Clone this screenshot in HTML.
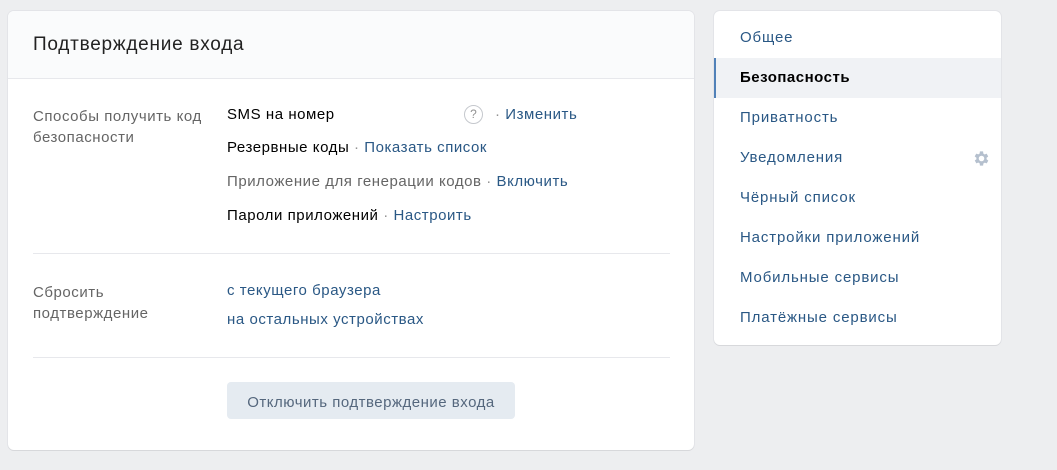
<!DOCTYPE html>
<html><head><meta charset="utf-8"><style>
*{margin:0;padding:0;box-sizing:border-box}
body{width:1057px;height:470px;background:#edeef0;font-family:"Liberation Sans",sans-serif;position:relative;overflow:hidden}
.card{position:absolute;background:#fff;border-radius:6px;box-shadow:0 1px 0 0 #d7d8db,0 0 0 1px #e3e4e8}
.a{position:absolute;white-space:nowrap;font-size:15px;line-height:18px;letter-spacing:.55px}
.k{color:#000}.g{color:#656565}.l{color:#2a5885}.d{color:#939393}
.m{position:absolute;left:26px;font-size:15px;color:#2a5885;letter-spacing:.85px;white-space:nowrap}
</style></head><body>
<div class="card" style="left:8px;top:11px;width:686px;height:439px;overflow:hidden">
  <div style="position:absolute;left:0;top:0;width:686px;height:68px;background:#fafbfc;border-bottom:1px solid #e7e8ec"></div>
  <div class="a k" style="left:25px;top:23px;font-size:19px;line-height:22px;color:#222;letter-spacing:.75px">Подтверждение входа</div>
  <div class="a g" style="left:25px;top:95px;line-height:21px">Способы получить код<br>безопасности</div>
  <div class="a k" style="left:219px;top:95px">SMS на номер</div>
  <div style="position:absolute;left:456px;top:94px;width:19px;height:19px;border:1px solid #c5c8cd;border-radius:50%;color:#939393;font-size:12px;text-align:center;line-height:17px">?</div>
  <div class="a" style="left:487px;top:95px"><span class="d">·</span> <span class="l">Изменить</span></div>
  <div class="a" style="left:219px;top:128px"><span class="k">Резервные коды</span> <span class="d">·</span> <span class="l">Показать список</span></div>
  <div class="a" style="left:219px;top:162px"><span class="g">Приложение для генерации кодов</span> <span class="d">·</span> <span class="l">Включить</span></div>
  <div class="a" style="left:219px;top:196px"><span class="k">Пароли приложений</span> <span class="d">·</span> <span class="l">Настроить</span></div>
  <div style="position:absolute;left:25px;top:242px;width:637px;height:1px;background:#e7e8ec"></div>
  <div class="a g" style="left:25px;top:271px;line-height:21px">Сбросить<br>подтверждение</div>
  <div class="a l" style="left:219px;top:271px">с текущего браузера</div>
  <div class="a l" style="left:219px;top:300px">на остальных устройствах</div>
  <div style="position:absolute;left:25px;top:346px;width:637px;height:1px;background:#e7e8ec"></div>
  <div style="position:absolute;left:219px;top:371px;width:288px;height:37px;background:#e5ebf1;border-radius:4px;color:#55677d;font-size:15px;letter-spacing:.5px;text-align:center;line-height:37px;padding-top:2px">Отключить подтверждение входа</div>
</div>
<div class="card" style="left:714px;top:11px;width:287px;height:334px;overflow:hidden">
  <div style="position:absolute;left:0;top:47px;width:287px;height:40px;background:#f0f2f5;border-left:2px solid #5181b8"></div>
  <div class="m" style="top:18px">Общее</div>
  <div class="m" style="top:58px;color:#000;font-weight:bold;letter-spacing:.5px">Безопасность</div>
  <div class="m" style="top:98px">Приватность</div>
  <div class="m" style="top:138px">Уведомления</div>
  <svg style="position:absolute;left:258px;top:138px" width="19" height="19" viewBox="0 0 24 24"><path fill="#b5c0ce" d="M19.4 13a7.5 7.5 0 0 0 0-2l2.1-1.6-2-3.5-2.5 1a7 7 0 0 0-1.7-1L15 3h-4l-.4 2.8a7 7 0 0 0-1.7 1l-2.5-1-2 3.5L6.6 11a7.5 7.5 0 0 0 0 2l-2.1 1.6 2 3.5 2.5-1a7 7 0 0 0 1.7 1L11 21h4l.4-2.8a7 7 0 0 0 1.7-1l2.5 1 2-3.5zM13 15.5a3.5 3.5 0 1 1 0-7 3.5 3.5 0 0 1 0 7z" transform="translate(-1 0)"/></svg>
  <div class="m" style="top:178px">Чёрный список</div>
  <div class="m" style="top:218px">Настройки приложений</div>
  <div class="m" style="top:258px">Мобильные сервисы</div>
  <div class="m" style="top:298px">Платёжные сервисы</div>
</div>
</body></html>
